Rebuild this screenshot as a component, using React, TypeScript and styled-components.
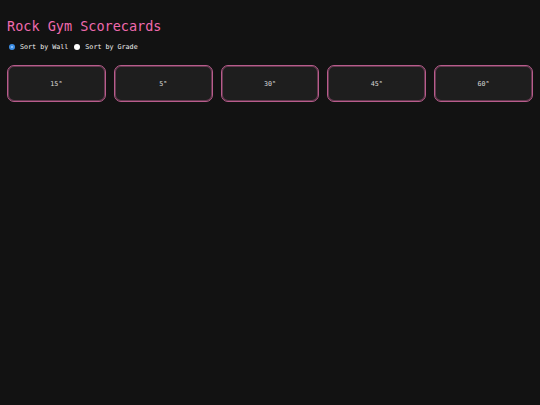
import { FC, useState } from 'react';
import styled, { createGlobalStyle } from 'styled-components';

const GlobalStyle = createGlobalStyle`
  body {
    margin: 0;
    background: #121212;
    font-family: 'DejaVu Sans Mono', 'Liberation Mono', monospace;
  }
`;

const Page = styled.div`
  display: flex;
  flex-flow: column nowrap;
  padding: 7px;
`;

const Title = styled.h1`
  all: unset;
  margin-top: 11px;
  font-size: 13.5px;
  line-height: 16px;
  font-weight: 400;
  color: #f06aae;
`;

const SortRow = styled.div`
  display: flex;
  flex-flow: row nowrap;
  align-items: center;
  gap: 6px;
  margin-top: 8px;
  padding-left: 2px;
  height: 10px;
`;

const SortOption = styled.label`
  display: flex;
  align-items: center;
  gap: 5px;
  font-size: 6.7px;
  color: #f0f0f0;
  cursor: pointer;
`;

const Dot = styled.span<{ $checked: boolean }>`
  box-sizing: border-box;
  width: 6px;
  height: 6px;
  border-radius: 50%;
  background: ${(p) => (p.$checked ? '#9ccaff' : '#ffffff')};
  border: ${(p) => (p.$checked ? '2px solid #3d8fe6' : 'none')};
`;

const HiddenRadio = styled.input`
  display: none;
`;

const Cards = styled.div`
  display: grid;
  grid-template-columns: repeat(5, 1fr);
  gap: 8px;
  margin-top: 13px;
`;

const Card = styled.div`
  box-sizing: border-box;
  height: 37px;
  display: flex;
  align-items: center;
  justify-content: center;
  background: #1e1e1e;
  border: 1px solid #b85c8c;
  box-shadow: inset 0 0 0 1px rgba(184, 92, 140, 0.45);
  border-radius: 7px;
  font-size: 6.7px;
  color: #dcdcdc;
`;

const walls = ['15°', '5°', '30°', '45°', '60°'];

const App: FC = () => {
  const [sort, setSort] = useState<'wall' | 'grade'>('wall');

  return (
    <Page>
      <GlobalStyle />
      <Title>Rock Gym Scorecards</Title>
      <SortRow>
        <SortOption>
          <HiddenRadio type="radio" checked={sort === 'wall'} onChange={() => setSort('wall')} />
          <Dot $checked={sort === 'wall'} />
          Sort by Wall
        </SortOption>
        <SortOption>
          <HiddenRadio type="radio" checked={sort === 'grade'} onChange={() => setSort('grade')} />
          <Dot $checked={sort === 'grade'} />
          Sort by Grade
        </SortOption>
      </SortRow>
      <Cards>
        {walls.map((w) => (
          <Card key={w}>{w}</Card>
        ))}
      </Cards>
    </Page>
  );
};

export default App;
